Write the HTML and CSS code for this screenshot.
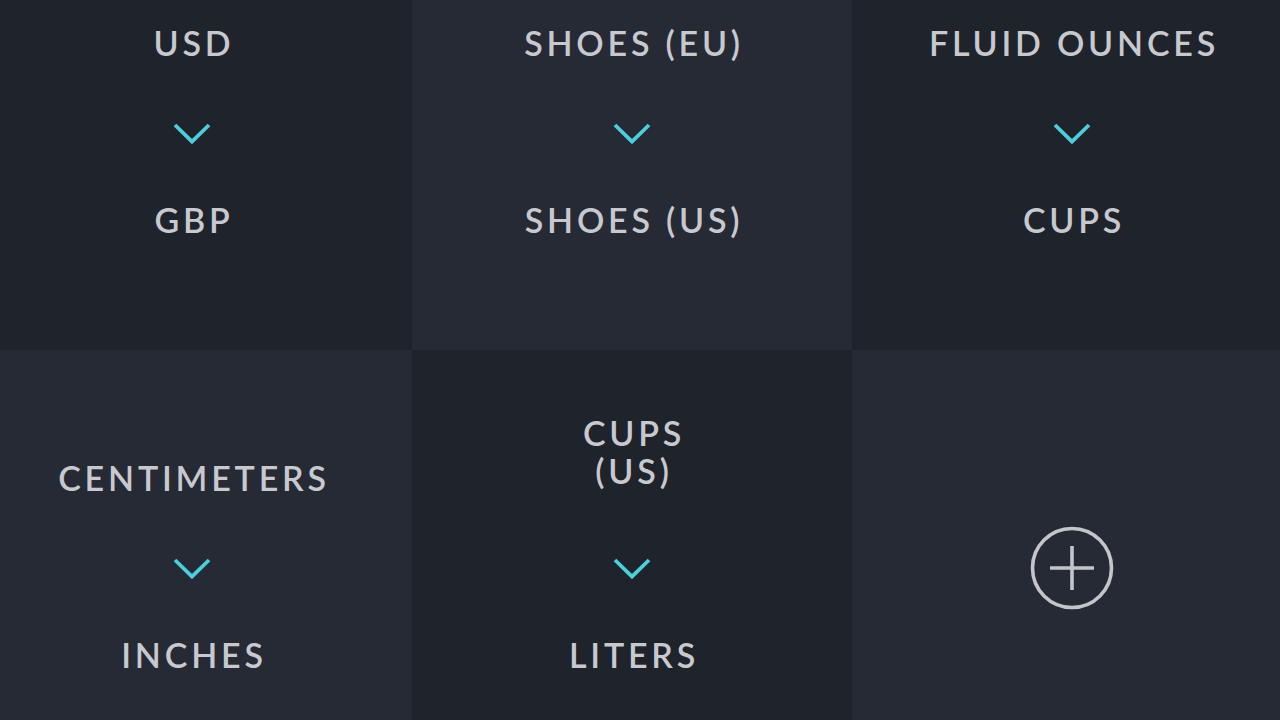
FILE: index.html
```html
<!DOCTYPE html>
<html>
<head>
<meta charset="utf-8">
<link rel="stylesheet" href="styles.css">
</head>
<body>
<main class="grid">
  <section class="cell dark top">
    <div class="label">USD</div>
    <svg class="chev" viewBox="0 0 40 24"><path d="M3 3 L20 19.5 L37 3"/></svg>
    <div class="label to">GBP</div>
  </section>
  <section class="cell light top">
    <div class="label">SHOES (EU)</div>
    <svg class="chev" viewBox="0 0 40 24"><path d="M3 3 L20 19.5 L37 3"/></svg>
    <div class="label to">SHOES (US)</div>
  </section>
  <section class="cell dark top">
    <div class="label">FLUID OUNCES</div>
    <svg class="chev" viewBox="0 0 40 24"><path d="M3 3 L20 19.5 L37 3"/></svg>
    <div class="label to">CUPS</div>
  </section>
  <section class="cell light bottom">
    <div class="label">CENTIMETERS</div>
    <svg class="chev" viewBox="0 0 40 24"><path d="M3 3 L20 19.5 L37 3"/></svg>
    <div class="label to">INCHES</div>
  </section>
  <section class="cell dark bottom">
    <div class="label two">CUPS<br>(US)</div>
    <svg class="chev" viewBox="0 0 40 24"><path d="M3 3 L20 19.5 L37 3"/></svg>
    <div class="label to">LITERS</div>
  </section>
  <section class="cell light add">
    <svg class="plus" viewBox="0 0 88 88"><circle cx="44" cy="44" r="39.5"/><path d="M44 22 V66 M22 44 H66"/></svg>
  </section>
</main>
</body>
</html>
```
FILE: styles.css
```css
html, body {
  margin: 0;
  padding: 0;
  background: #1f232c;
  overflow: hidden;
  width: 1280px;
  height: 720px;
}
.grid {
  display: grid;
  grid-template-columns: 440px 440px 440px;
  grid-template-rows: 350px 370px;
  width: 1320px;
  height: 720px;
  margin-left: -28px;
}
.cell {
  display: flex;
  flex-direction: column;
  align-items: center;
  box-sizing: border-box;
  font-family: "Lato", "Noto Sans", sans-serif;
  color: #c7c9cf;
}
.dark { background: #1f232c; }
.light { background: #262a35; }
.top { padding-top: 23px; }
.bottom { padding-top: 108px; }
.label {
  font-size: 34px;
  line-height: 40px;
  letter-spacing: 3.8px;
  font-weight: 600;
  text-align: center;
  padding-left: 4px;
  white-space: nowrap;
}
.label.two {
  line-height: 38px;
  margin-top: -44px;
  margin-bottom: 8px;
}
.chev {
  width: 40px;
  height: 24px;
  margin-top: 59px;
  margin-bottom: 54px;
  fill: none;
  stroke: #4ccfdc;
  stroke-width: 3.8;
  stroke-linecap: butt;
}
.add {
  justify-content: center;
  padding-top: 66px;
}
.plus {
  width: 88px;
  height: 88px;
  fill: none;
  stroke: #c4c5ca;
  stroke-width: 3.6;
}
```
